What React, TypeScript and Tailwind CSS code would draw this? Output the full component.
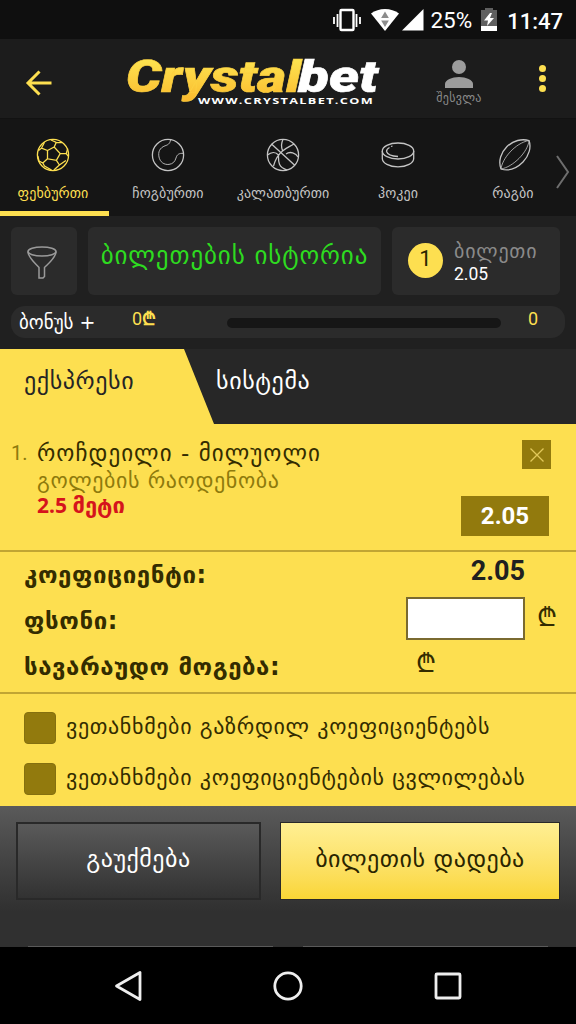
import type { ReactNode } from 'react'
import clsx from 'clsx'

interface Sport {
  name: string
  icon: ReactNode
  active?: boolean
}

const sports: Sport[] = [
  {
    name: 'ფეხბურთი',
    active: true,
    icon: (
      <>
        <circle cx="17" cy="17" r="15.6" />
        <path d="M11.5 12.5l6.700-3.500 6 6.600-3.800 6.800-8.900-1.600zM11.500 12.500L5.500 10.200M18.200 9l2-4.600M24.200 15.600h6M20.400 22.400l3 4.600M11.500 20.800L6.800 25M2.500 12.500l3-2.300 3-6M15 2l5.200 2.400L26 4.600M30.200 15.600l1.500-5M30.200 15.600l2 2.600M23.400 27l6.500-4.500M23.400 27l-5.500 5M15.500 32l-7-4-1.700-3M6.800 25L3 23l-1.200-5" />
      </>
    ),
  },
  {
    name: 'ჩოგბურთი',
    icon: (
      <>
        <circle cx="17" cy="17" r="15.6" />
        <path
          d="M19.500 2c-.5 4-3 5-5.500 5.800C8.500 10 7 14 8 19c1 5 5 8 10 7.400 4-.5 6-2.900 7-6.400 1-3.500 3-5 7.500-4.600"
          strokeWidth=".9"
        />
      </>
    ),
  },
  {
    name: 'კალათბურთი',
    icon: (
      <>
        <circle cx="17" cy="17" r="15.6" />
        <path d="M5.500 6L29 27.500M28 6c-4 2.500-8 4-11.500 7-5 4-7 8-9 15M17 1.500c-2 4-2 7-.5 11M1.500 17c3.500-3 8-3.500 11 0M12.500 17c0 6-1 12 8.500 15M20 16c4-3 10-1 12 3" />
      </>
    ),
  },
  {
    name: 'ჰოკეი',
    icon: (
      <>
        <ellipse cx="17" cy="13" rx="15.700" ry="8" />
        <path d="M1.300 13v7.500c0 4.600 7 8.300 15.700 8.300s15.700-3.700 15.700-8.300V13M5.500 13.500c0-2 1-3 3-4M5.500 13.500c1 3 5 4.700 11.500 5M10 8.500l1.500-.5" />
      </>
    ),
  },
  {
    name: 'რაგბი',
    icon: (
      <g transform="translate(2 0)">
        <path d="M3 31C0 23 3 14.500 9 8.500 15 2.500 24 .5 31 2.500 33.500 9 31 18 25 24 19 30 11 33.500 3 31z" />
        <path d="M3 31C4 21 17 5 31 2.500M3 31C15 29 30 14 31 2.500" strokeWidth=".8" />
      </g>
    ),
  },
]

const agreements = ['ვეთანხმები გაზრდილ კოეფიციენტებს', 'ვეთანხმები კოეფიციენტების ცვლილებას']

function StatusBar() {
  return (
    <div className="flex h-[39px] items-center justify-end bg-[#0f0f0f] pr-[13px] text-white">
      <svg width="30" height="24" viewBox="0 0 30 24" fill="none" stroke="#fff" strokeWidth="2">
        <rect x="8.500" y="2" width="13" height="20" rx="1" strokeWidth="2.400" />
        <path d="M5.500 6v13M24.500 6v13M2 9v7M28 9v7" strokeWidth="1.800" />
      </svg>
      <svg className="ml-[9px]" width="28" height="24" viewBox="0 0 29 24" preserveAspectRatio="none">
        <path d="M0 5.500C8-.5 21-.5 29 5.500L14.500 23z" fill="#fff" />
        <path d="M14.500 3.500l4 6.500h-8zM14.500 19l-4-6.500h8z" fill="#8c8c8c" />
      </svg>
      <svg className="ml-[3px]" width="22" height="22" viewBox="0 0 22 22">
        <path d="M21.500 0v21.500H0z" fill="#fff" />
      </svg>
      <span className="mt-[3px] ml-[6px] text-[22.500px]">25%</span>
      <svg className="ml-[9px]" width="16" height="24" viewBox="0 0 16 24">
        <path d="M4 2V0h8v2h4v18H0V2z" fill="#5f5f5f" />
        <path d="M0 18h16v5H0zM9 5L3 12.500h4L6 18l7-8H9L11 5z" fill="#fff" />
      </svg>
      <span className="mt-[3px] ml-[10px] text-[22px] font-medium">11:47</span>
    </div>
  )
}

function Header() {
  return (
    <header className="flex h-20 items-center border-b border-[#121212] bg-[#1c1c1c]">
      <svg
        className="mt-2 ml-[25px]"
        width="27"
        height="26"
        viewBox="0 0 27 26"
        fill="none"
        stroke="#fddf50"
        strokeWidth="3"
      >
        <path d="M26.500 13H3M14.500 1.500L3 13l11.500 11.500" />
      </svg>
      <svg className="ml-[73px]" width="260" height="78" viewBox="0 -11 260 78">
        <defs>
          <linearGradient id="gold" x1="0" y1="0" x2="0" y2="1">
            <stop offset=".2" stopColor="#fde24f" />
            <stop offset="1" stopColor="#fbb92c" />
          </linearGradient>
        </defs>
        <g className="font-['Roboto'] text-[45px] font-black italic" strokeWidth=".6">
          <text x="1" y="41" textLength="175" lengthAdjust="spacingAndGlyphs" fill="url(#gold)" stroke="#fcd040">
            Crystal
          </text>
          <text x="173" y="41" textLength="80" lengthAdjust="spacingAndGlyphs" fill="#fff" stroke="#fff">
            bet
          </text>
        </g>
        <text
          x="73"
          y="53"
          textLength="176"
          lengthAdjust="spacingAndGlyphs"
          className="font-['Open_Sans'] text-[9.500px] font-bold tracking-[1px]"
          fill="#fff"
        >
          WWW.CRYSTALBET.COM
        </text>
      </svg>
      <div className="ml-[46px] flex w-[56px] flex-col items-center text-[#9c9c9c]">
        <svg className="mt-[11px]" width="28" height="28" viewBox="0 0 28 28" fill="currentColor">
          <circle cx="14" cy="7" r="7" />
          <path d="M0 28v-4c0-4 7-7 14-7s14 3 14 7v4z" />
        </svg>
        <span className="font-['DejaVu_Sans',sans-serif] text-[12px] leading-5 tracking-[.3px] whitespace-nowrap text-[#8a8a8a]">
          შესვლა
        </span>
      </div>
      <div className="ml-[52px] flex flex-col gap-[3px]">
        {[0, 1, 2].map((dot) => (
          <span key={dot} className="size-[7px] rounded-full bg-[#fddf50]" />
        ))}
      </div>
    </header>
  )
}

function SportsNav() {
  return (
    <nav className="relative flex h-[97px] overflow-hidden bg-[#151515]">
      {sports.map((sport) => (
        <div
          key={sport.name}
          className={clsx(
            'flex w-[115px] shrink-0 flex-col items-center pt-[19px] pr-[10px]',
            sport.active ? 'text-[#fddf50]' : 'text-[#c4c4c4]',
          )}
        >
          <svg
            className="overflow-visible"
            width="34"
            height="34"
            viewBox="0 0 34 34"
            fill="none"
            stroke="currentColor"
            strokeWidth="1.300"
          >
            {sport.icon}
          </svg>
          <span className="mt-[11px] -mr-px font-['DejaVu_Sans',sans-serif] text-[14px] leading-[21px] tracking-[.1px] whitespace-nowrap">
            {sport.name}
          </span>
        </div>
      ))}
      <span className="absolute bottom-0 left-0 h-[5px] w-[109px] bg-[#fddf50]" />
      <svg
        className="absolute top-[36px] right-[6px]"
        width="14"
        height="34"
        viewBox="0 0 14 34"
        fill="none"
        stroke="#6e6e6e"
        strokeWidth="2"
      >
        <path d="M1 1l11 16L1 33" />
      </svg>
    </nav>
  )
}

function TicketBar() {
  return (
    <section className="h-[133px] bg-[#202020] px-[11px] pt-[11px]">
      <div className="flex h-[68px] gap-[11px]">
        <div className="flex w-[66px] items-center justify-center rounded-md bg-[#2b2b2b]">
          <svg
            className="mt-[3px] mr-[5px]"
            width="30"
            height="33"
            viewBox="0 0 30 33"
            fill="none"
            stroke="#9a9a9a"
            strokeWidth="1.500"
          >
            <ellipse cx="15" cy="5.500" rx="14" ry="4.500" />
            <path d="M1 5.500C1 11.500 8 17 12 21.500V32h4l1.500-1.500v-9C22 17 29 11.500 29 5.500" />
          </svg>
        </div>
        <div className="flex w-[293px] justify-center rounded-md bg-[#2b2b2b] pt-[11px]">
          <span className="font-['DejaVu_Sans',sans-serif] text-[25px] leading-9 tracking-[.9px] whitespace-nowrap text-[#2edb20]">
            ბილეთების ისტორია
          </span>
        </div>
        <div className="flex w-[168px] rounded-md bg-[#2b2b2b] pl-4">
          <span className="mt-4 flex size-[35px] justify-center rounded-full bg-[#fddf50] text-[22px] leading-[32px] text-[#2a2500]">
            1
          </span>
          <div className="ml-[11px] pt-3">
            <div className="font-['DejaVu_Sans',sans-serif] text-[20px] leading-6 tracking-[.8px] whitespace-nowrap text-[#8a8a8a]">
              ბილეთი
            </div>
            <div className="text-[17.500px] leading-[22px] text-white">2.05</div>
          </div>
        </div>
      </div>
      <div className="mt-[11px] flex h-8 w-[554px] items-center rounded-[14px] bg-[#2b2b2b] text-[#fddf50]">
        <span className="ml-2 w-[113px] font-['DejaVu_Sans',sans-serif] text-[19px] whitespace-nowrap text-white">
          ბონუს +
        </span>
        <span className="mb-2 w-[95px] text-[18px]">
          0<span className="font-bold">₾</span>
        </span>
        <span className="mt-0.5 h-[10px] w-[274px] rounded-full bg-[#161616]" />
        <span className="mb-2 ml-[27px] text-[18px]">0</span>
      </div>
    </section>
  )
}

function SlipTabs() {
  return (
    <div className="flex h-[75px] bg-[#272727] font-['DejaVu_Sans',sans-serif] text-[24px] leading-8 tracking-[.6px]">
      <div className="h-full w-[214px] bg-[#fddf50] pt-4 pl-[24px] text-[#252525] [clip-path:polygon(0_0,184px_0,214px_100%,0_100%)]">
        ექსპრესი
      </div>
      <div className="pt-4 pl-0.5 text-white">სისტემა</div>
    </div>
  )
}

function BetRow() {
  return (
    <div className="flex h-[128px] justify-between border-b-2 border-[#c1a533] pr-[27px] pl-[11px]">
      <div className="flex pt-[14px]">
        <span className="w-[26px] text-[20px] leading-[31px] text-[#8e7a0c]">1.</span>
        <div className="font-['DejaVu_Sans',sans-serif] whitespace-nowrap">
          <div className="text-[23px] leading-[30px] tracking-[1.05px] text-[#332c00]">როჩდეილი - მილუოლი</div>
          <div className="text-[22px] leading-[25px] tracking-[.6px] text-[#8e7a0c]">გოლების რაოდენობა</div>
          <div className="font-['Noto_Sans','DejaVu_Sans',sans-serif] text-[21px] leading-6 font-bold text-[#d5141c]">
            2.5 <span className="font-['DejaVu_Sans',sans-serif] text-[22px]">მეტი</span>
          </div>
        </div>
      </div>
      <div className="flex flex-col items-end pt-4">
        <button
          type="button"
          className="mr-[-2px] flex size-[29px] items-center justify-center bg-[#927a0d]"
          aria-label="×"
        >
          <svg width="14" height="14" viewBox="0 0 14 14" stroke="#e2c85a" strokeWidth="1.300">
            <path d="M.5.5l13 13M13.500.5l-13 13" />
          </svg>
        </button>
        <div className="mt-[27px] h-10 w-[88px] bg-[#927a0d] text-center text-[24px] leading-[40px] font-bold text-white">
          2.05
        </div>
      </div>
    </div>
  )
}

function Totals() {
  return (
    <div className="h-[142px] border-b-2 border-[#c1a533] pl-6 text-[24px] font-bold text-[#332c00]">
      <div className="flex h-[45px] items-center justify-between pr-[51px]">
        <span className="font-['DejaVu_Sans',sans-serif] tracking-[.6px]">კოეფიციენტი:</span>
        <span className="mb-1.5 text-[27px] text-[#202020]">2.05</span>
      </div>
      <div className="flex h-[44px] items-center">
        <span className="mt-1 w-[382px] font-['DejaVu_Sans',sans-serif] tracking-[.6px]">ფსონი:</span>
        <input className="mb-0.5 h-[43px] w-[119px] border-2 border-[#7a6a30] bg-white px-2" />
        <span className="mb-1 ml-3 text-[26px] font-light">₾</span>
      </div>
      <div className="flex h-[48px] items-center">
        <span className="mt-1 w-[392px] font-['DejaVu_Sans',sans-serif] tracking-[.55px] whitespace-nowrap">
          სავარაუდო მოგება:
        </span>
        <span className="mb-1 text-[26px] font-light">₾</span>
      </div>
    </div>
  )
}

function Agreements() {
  return (
    <div className="flex h-[112px] flex-col gap-[19px] pt-[18px] pl-6">
      {agreements.map((text) => (
        <label key={text} className="flex h-8 items-center">
          <span className="size-8 rounded-sm border border-[#85700f] bg-[#927a0d]" />
          <span className="mb-1 ml-2.5 font-['DejaVu_Sans',sans-serif] text-[22px] tracking-[.65px] whitespace-nowrap text-[#332c00]">
            {text}
          </span>
        </label>
      ))}
    </div>
  )
}

function Actions() {
  return (
    <div className="flex h-[141px] flex-col justify-between bg-linear-to-b from-[#5a5a5a] to-[#303030] to-75% pt-[16px]">
      <div className="flex gap-[19px] px-4 font-['DejaVu_Sans',sans-serif] text-[24px]">
        <button
          type="button"
          className="h-[78px] w-[245px] border-2 border-[#292929] bg-linear-to-b from-[#5a5a5a] to-[#323232] pb-1 tracking-[.5px] text-white"
        >
          გაუქმება
        </button>
        <button
          type="button"
          className="h-[78px] w-[280px] border border-[#292929] bg-linear-to-b from-[#ffef92] to-[#fad634] pb-1 tracking-[.5px] whitespace-nowrap text-[#2a2500]"
        >
          ბილეთის დადება
        </button>
      </div>
      <div className="flex justify-between px-7">
        <span className="h-px w-[245px] bg-[#5a5a5a]" />
        <span className="h-px w-[245px] bg-[#5a5a5a]" />
      </div>
    </div>
  )
}

function NavigationBar() {
  return (
    <div className="flex h-[77px] items-center justify-between bg-black px-[114px]">
      <svg width="28" height="32" viewBox="0 0 28 32" fill="none" stroke="#eee" strokeWidth="2.800">
        <path d="M26 2.500v27L2.500 16z" strokeLinejoin="round" />
      </svg>
      <svg width="30" height="32" viewBox="0 0 30 32" fill="none" stroke="#eee" strokeWidth="2.800">
        <circle cx="15" cy="16" r="13.200" />
      </svg>
      <svg width="28" height="32" viewBox="0 0 28 32" fill="none" stroke="#eee" strokeWidth="2.800">
        <rect x="2" y="4" width="24" height="24" rx="1" />
      </svg>
    </div>
  )
}

export default function App() {
  return (
    <div className="h-[1024px] w-[576px] overflow-hidden bg-black font-['Roboto','DejaVu_Sans',sans-serif]">
      <StatusBar />
      <Header />
      <SportsNav />
      <TicketBar />
      <SlipTabs />
      <main className="bg-[#fddf50]">
        <BetRow />
        <Totals />
        <Agreements />
      </main>
      <Actions />
      <NavigationBar />
    </div>
  )
}
